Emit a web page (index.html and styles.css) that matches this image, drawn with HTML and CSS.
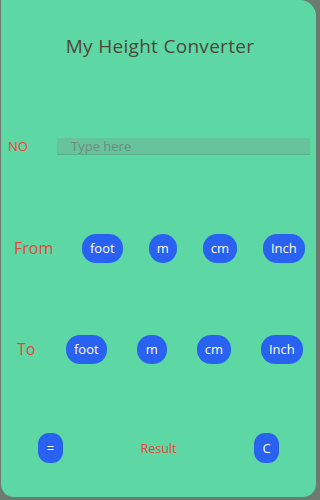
FILE: index.html
```html
<!DOCTYPE html>
<html>
<head>
<meta charset="utf-8">
<link rel="stylesheet" href="styles.css">
</head>
<body>
<div class="card">
  <div class="row title-row"><h1 class="title">My Height Converter</h1></div>
  <div class="row input-row">
    <span class="label no-label">NO</span>
    <input class="num-input" type="text" placeholder="Type here">
  </div>
  <div class="row unit-row from-row">
    <span class="label unit-label from-label">From</span>
    <button class="btn">foot</button>
    <button class="btn">m</button>
    <button class="btn">cm</button>
    <button class="btn">Inch</button>
  </div>
  <div class="row unit-row to-row">
    <span class="label unit-label to-label">To</span>
    <button class="btn">foot</button>
    <button class="btn btn-m">m</button>
    <button class="btn">cm</button>
    <button class="btn">Inch</button>
  </div>
  <div class="row action-row">
    <button class="btn btn-sq">=</button>
    <span class="result">Result</span>
    <button class="btn btn-sq">C</button>
  </div>
</div>
</body>
</html>
```
FILE: styles.css
```css
html, body {
  margin: 0;
  padding: 0;
  background: #6c7a6f;
  font-family: "Open Sans", "Noto Sans", sans-serif;
}
.card {
  margin-left: 1px;
  width: 315px;
  height: 497px;
  background: #5dd8a4;
  border-radius: 0 16px 13px 13px;
  display: flex;
  flex-direction: column;
  overflow: hidden;
}
.row {
  display: flex;
  align-items: center;
  box-sizing: border-box;
}
.title-row {
  height: 92px;
  justify-content: center;
  padding-left: 3px;
}
.title {
  margin: 0;
  font-weight: normal;
  font-size: 19px;
  color: #4f473c;
  letter-spacing: 0.3px;
}
.input-row {
  height: 108px;
  padding-left: 7px;
}
.label {
  color: #e5463a;
}
.no-label {
  width: 49px;
  font-size: 13px;
}
.num-input {
  width: 253px;
  height: 17px;
  box-sizing: border-box;
  border: none;
  border-bottom: 1px solid #58ae88;
  background: #66c39c;
  padding: 0 0 0 14px;
  font-family: inherit;
  font-size: 13px;
  color: #333;
  outline: none;
}
.num-input::placeholder {
  color: #6f8c7e;
}
.unit-row {
  gap: 26px;
}
.from-row {
  height: 96px;
  padding-left: 13px;
}
.from-row .unit-label {
  width: 68px;
  margin-right: -26px;
}
.to-row {
  height: 106px;
  padding-left: 16px;
  gap: 30px;
}
.to-row .unit-label {
  width: 49px;
  margin-right: -30px;
}
.unit-label {
  font-size: 16px;
}
.btn {
  height: 29px;
  padding: 0 8px;
  border: none;
  border-radius: 14px;
  background: #2962f0;
  color: #fff;
  font-family: inherit;
  font-size: 13px;
  font-weight: 500;
}
.btn-m {
  padding: 0 9px;
}
.action-row {
  height: 92px;
  padding: 0 37px;
  justify-content: space-between;
}
.btn-sq {
  width: 25px;
  height: 30px;
  padding: 0;
  border-radius: 11px;
}
.result {
  color: #e5463a;
  font-size: 12.5px;
}
```
